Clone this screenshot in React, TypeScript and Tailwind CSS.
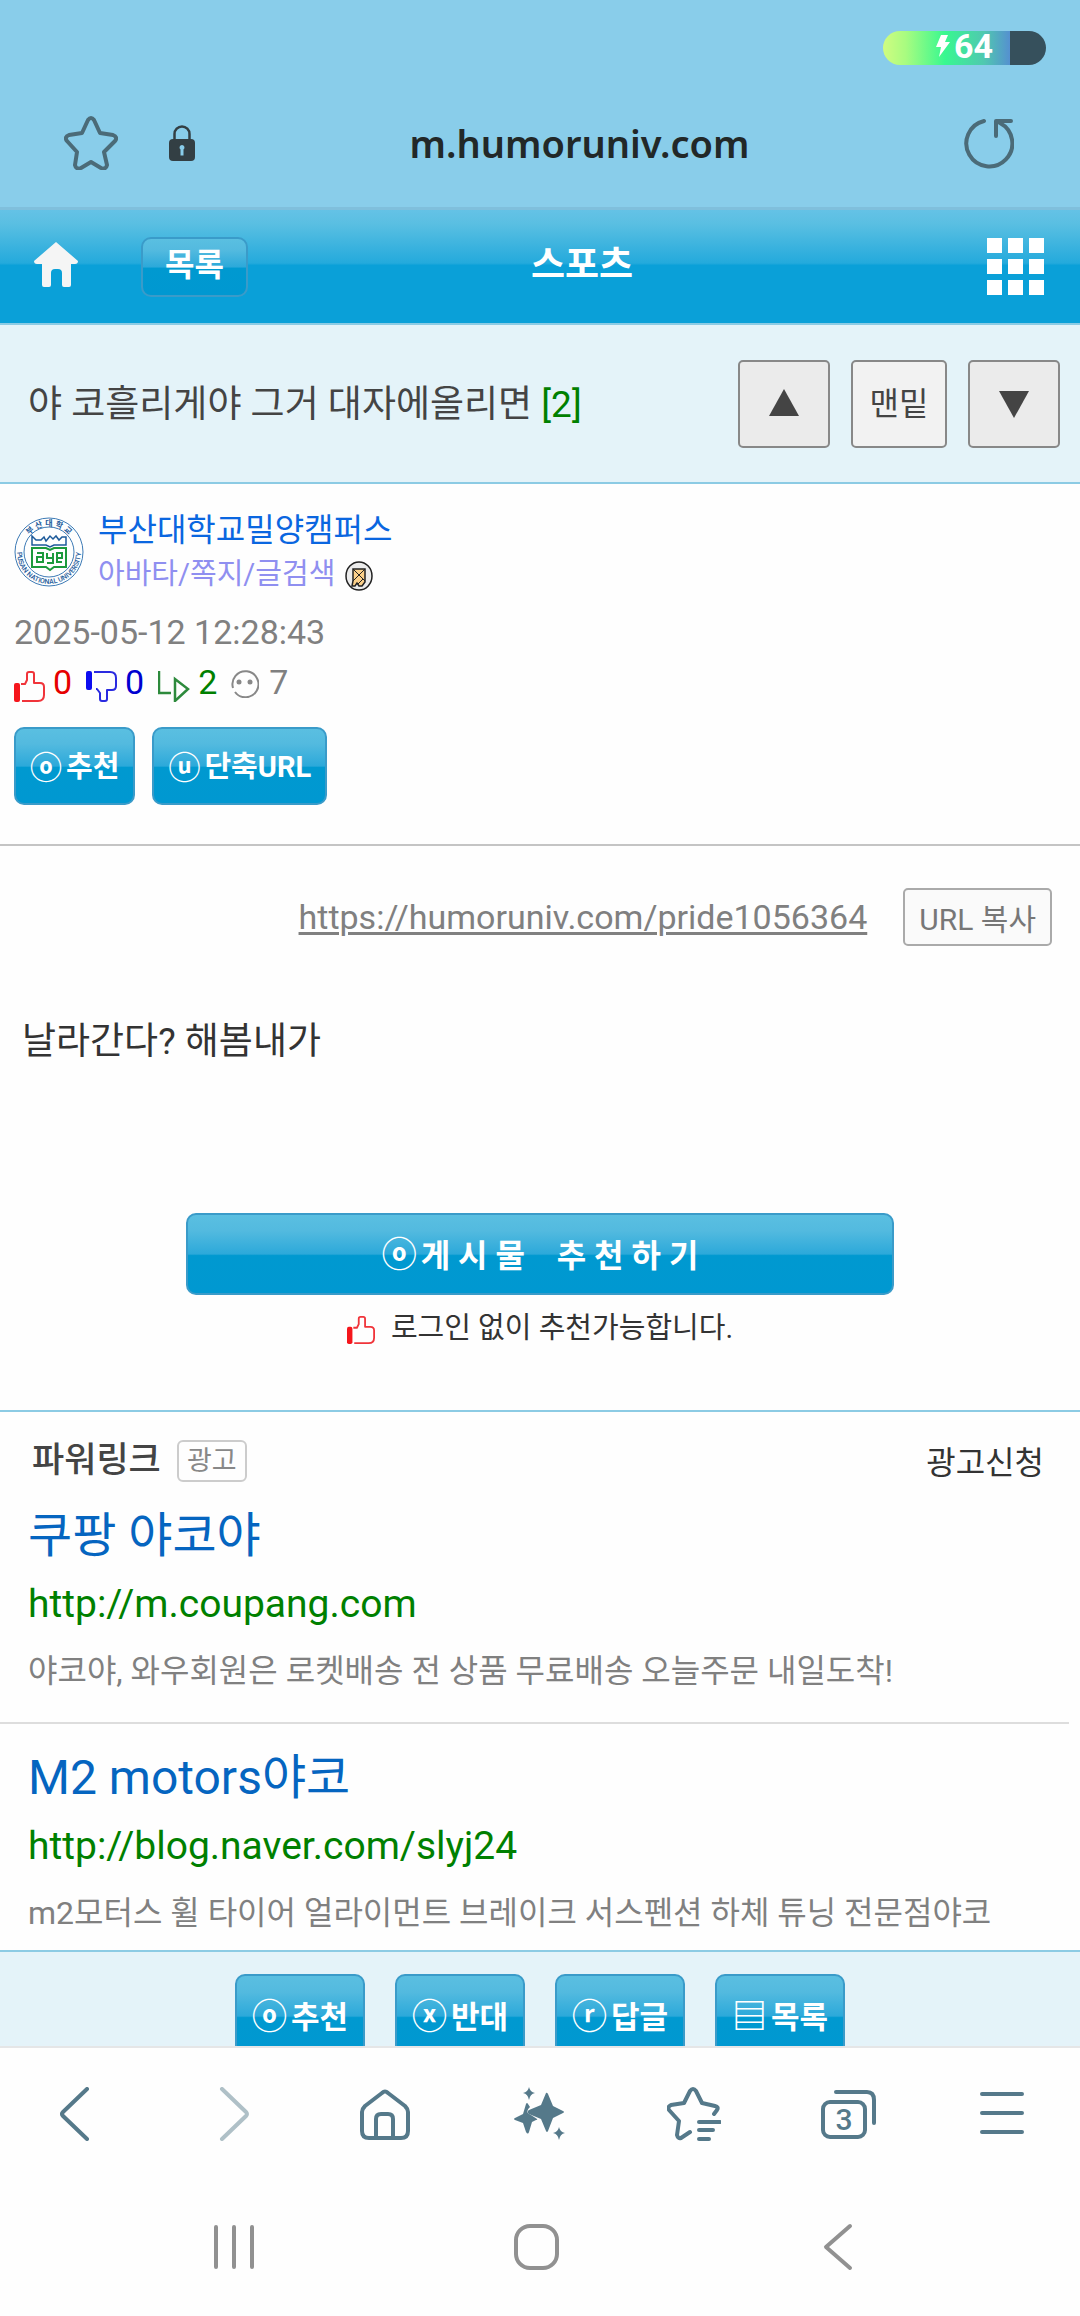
import type { ReactNode } from 'react'

const GLOSS = 'bg-[linear-gradient(#5abfe1_0%,#53badf_20%,#2ca9da_50%,#0099d0_52%,#0098d1_100%)]'

const ADS = [
  {
    title: '쿠팡 야코야',
    url: 'http://m.coupang.com',
    text: '야코야, 와우회원은 로켓배송 전 상품 무료배송 오늘주문 내일도착!',
  },
  {
    title: 'M2 motors야코',
    url: 'http://blog.naver.com/slyj24',
    text: 'm2모터스 휠 타이어 얼라이먼트 브레이크 서스펜션 하체 튜닝 전문점야코',
  },
]

const ACTIONS = [
  { mark: 'ⓞ', label: '추천' },
  { mark: 'ⓧ', label: '반대' },
  { mark: 'ⓡ', label: '답글' },
  { mark: '▤', label: '목록' },
]

function ThumbUp({ className }: { className: string }) {
  return (
    <svg viewBox="0 0 31 31" className={className} fill="none" stroke="#f0343a" strokeWidth="2" strokeLinejoin="round">
      <rect x="0" y="12" width="6" height="19" rx="2" fill="#f5161c" stroke="none" />
      <path d="M7 13h4l2-4V3q0-2 2-2h3q2 0 2 2v9h6q4 0 4 4v8q0 6-6 6H8" />
    </svg>
  )
}

function ThumbDown() {
  return (
    <svg viewBox="0 0 31 31" className="size-[31px]" fill="none" stroke="#2a2ae0" strokeWidth="2" strokeLinejoin="round">
      <rect x="0" y="0" width="6" height="19" rx="2" fill="#0d0df0" stroke="none" />
      <path d="M8 1h16q6 0 6 6v8q0 4-4 4h-5v9q0 2-2 2h-3q-2 0-2-2v-6l-3-4H10" />
    </svg>
  )
}

function Emblem() {
  return (
    <svg viewBox="0 0 70 72" className="h-[72px] w-[70px] shrink-0" fill="none" aria-label="부산대학교">
      <defs>
        <path id="emblem-top" d="M9 36a26 26 0 0 1 52 0" />
        <path id="emblem-bottom" d="M4 28A32 32 0 1 0 66 28" />
      </defs>
      <circle cx="35" cy="36" r="34" stroke="#3d7ab5" />
      <circle cx="35" cy="36" r="25" stroke="#3d7ab5" />
      <text fill="#1d5a9a" fontSize="8" fontWeight="700" textAnchor="middle">
        <textPath href="#emblem-top" startOffset="50%">부 산 대 학 교</textPath>
      </text>
      <text fill="#1d5a9a" fontSize="7" fontWeight="500" textAnchor="middle">
        <textPath href="#emblem-bottom" startOffset="50%">PUSAN NATIONAL UNIVERSITY</textPath>
      </text>
      <path d="M18 20l4 4h5l3-3 2 4 4-5 3 3 3-3 3 4 3-3h4v8H40l-4 2-4-2H18z" stroke="#1d5a9a" strokeWidth="1.5" />
      <path d="M18 32h14l4 2 4-2h12v19H40l-4 3-4-3H18z" stroke="#1c9a3c" strokeWidth="2" />
      <path d="M23 37h6v9h-6v-5h6M33 37v5h6M39 37v10h-6M48 46h-5v-9h5v5h-5" stroke="#1c9a3c" strokeWidth="2" />
    </svg>
  )
}

function GlossButton({ className, children }: { className: string; children: ReactNode }) {
  return (
    <button type="button"
      className={`flex items-center justify-center rounded-[10px] border-2 border-[#3a9bc9] font-bold text-white ${GLOSS} ${className}`}>
      {children}
    </button>
  )
}

function BrowserBar() {
  return (
    <header className="shrink-0 border-b-[3px] border-[#80bfdc] bg-[#89cdea]">
      <div className="flex justify-end pr-[34px] pt-[31px]">
        <div className="flex h-[34px] w-[163px] items-center justify-center gap-1 rounded-full bg-[linear-gradient(90deg,#d0fc80_0%,#a8fc80_14%,#38f890_38%,#50c8b0_62%,#5590d0_78%,#36505c_78%)] pb-1 text-[34px] leading-8 font-bold text-white">
          <svg viewBox="0 0 14 22" className="h-[22px] w-[14px]" fill="#fff">
            <path d="M5 0h7L9 7h5L3 22l2-10H0z" />
          </svg>
          64
        </div>
      </div>
      <div className="mt-[14px] flex h-32 items-center pl-16 pr-[66px] text-[#4b6b78]">
        <button type="button" aria-label="북마크">
          <svg viewBox="0 0 54 54" className="size-[54px]" fill="none" stroke="currentColor" strokeWidth="4" strokeLinejoin="round">
            <path d="M24 4q3-4 6 0l6 13 13 2q5 2 2 6L40 36l3 13q-1 5-6 3l-10-6-10 6q-5 2-6-3l2-13L3 25q-3-4 2-6l13-2z" />
          </svg>
        </button>
        <svg viewBox="0 0 26 36" className="ml-[51px] h-9 w-[26px]" fill="none">
          <path d="M5.500 15V9a7.500 7.500 0 0 1 15 0v6" stroke="#333f44" strokeWidth="2.500" />
          <rect y="14" width="26" height="22" rx="4" fill="#333f44" />
          <path d="M13 20a2.500 2.500 0 0 1 1.500 4.500v6h-3v-6A2.500 2.500 0 0 1 13 20z" fill="#89cdea" />
        </svg>
        <div className="flex-1 text-center font-['Noto_Sans','Roboto',sans-serif] text-[38px] leading-[48px] font-semibold text-[#222828]">m.humoruniv.com</div>
        <button type="button" aria-label="새로고침">
          <svg viewBox="0 0 50 52" className="h-[52px] w-[50px]" fill="none" stroke="currentColor" strokeWidth="4" strokeLinecap="round" strokeLinejoin="round">
            <path d="M20 4A23 23 0 1 0 36 6M47 4H32v15" />
          </svg>
        </button>
      </div>
    </header>
  )
}

function BoardHeader() {
  return (
    <div className="grid h-[115px] grid-cols-[248px_1fr_164px] items-center border-b-2 border-[#8ccbe4] bg-[linear-gradient(#64c2e6_0%,#5abfe2_12%,#24aadc_47%,#0aa0d8_49%)] text-white">
      <div className="flex items-center justify-between pl-[34px]">
        <a href="#home" aria-label="홈">
          <svg viewBox="0 0 44 50" className="h-[50px] w-11" fill="#f5f5f5">
            <path d="M22 0l22 19q0 3-3 3h-4v21q0 2-2 2h-5q-2 0-2-2V31q0-4-4-4h-3q-4 0-4 4v12q0 2-2 2h-5q-2 0-2-2V22H3q-3 0-3-3z" />
          </svg>
        </a>
        <GlossButton className="h-[60px] w-[107px] pb-1 text-[32px]">목록</GlossButton>
      </div>
      <h1 className="pb-0.5 text-center text-[37px] leading-[48px] font-bold">스포츠</h1>
      <button type="button" aria-label="전체 메뉴" className="ml-auto mr-9 grid grid-cols-3 gap-[6px]">
        {Array.from({ length: 9 }, (_, i) => <span key={i} className="size-[15px] bg-white" />)}
      </button>
    </div>
  )
}

function TitleBar() {
  return (
    <div className="flex h-[159px] items-center border-b-2 border-[#8ccbe4] bg-[#e4f3f9] pl-7 pr-5 text-[#444]">
      <h2 className="flex-1 pt-0.5 text-[37px] leading-[48px]">
        야 코흘리게야 그거 대자에올리면 <span className="text-[#008000]">[2]</span>
      </h2>
      <div className="flex gap-[21px] text-[32px]">
        <button type="button" aria-label="이전 글" className="flex h-[88px] w-[92px] items-center justify-center rounded-[5px] border-2 border-[#888] bg-[#ebebeb]">
          <svg viewBox="0 0 30 30" className="size-[30px]" fill="#444"><path d="M15 0l15 27H0z" /></svg>
        </button>
        <button type="button" className="h-[88px] w-24 rounded-[5px] border-2 border-[#888] bg-[#f2f2f2]">맨밑</button>
        <button type="button" aria-label="다음 글" className="flex h-[88px] w-[92px] items-center justify-center rounded-[5px] border-2 border-[#888] bg-[#ebebeb]">
          <svg viewBox="0 0 30 30" className="size-[30px]" fill="#444"><path d="M0 2h30L15 29z" /></svg>
        </button>
      </div>
    </div>
  )
}

function Author() {
  return (
    <section className="border-b-2 border-[#c4c4c4] px-[14px] pb-[39px] pt-6">
      <div className="flex items-center gap-[14px]">
        <Emblem />
        <div className="leading-[44px]">
          <div className="text-[32px] text-[#0a66e0]">부산대학교밀양캠퍼스</div>
          <div className="flex items-center gap-[10px] text-[29px] text-[#8f8ff0]">
            아바타/쪽지/글검색
            <svg viewBox="0 0 28 30" className="mt-1 h-[30px] w-7" stroke="#222" fill="none">
              <ellipse cx="14" cy="15" rx="13" ry="14" fill="#ececec" strokeWidth="1.500" />
              <path d="M8 8h12v13l-3 4h-3l-2-3-2 3H7l1-5z" fill="#fbd08a" strokeWidth="1.500" />
              <path d="M8 8l12 12M20 8L8 20M13 23l5-5" strokeWidth="1" />
            </svg>
          </div>
        </div>
      </div>
      <time className="mt-3 block text-[34px] leading-[48px] text-[#808080]">2025-05-12 12:28:43</time>
      <div className="mt-0.5 flex items-center text-[34px] leading-[48px]">
        <ThumbUp className="mt-2 size-[31px]" />
        <span className="ml-2 mr-[14px] text-[#e60000]">0</span>
        <span className="mt-2"><ThumbDown /></span>
        <span className="ml-2 mr-[14px] text-[#0000d0]">0</span>
        <svg viewBox="0 0 32 31" className="mt-2 h-[31px] w-8" fill="none" stroke="#2d8a3c" strokeWidth="2.500">
          <path d="M1 0v22h12" />
          <path d="M17 8v22l13-12z" />
        </svg>
        <span className="ml-2 mr-[14px] text-[#008000]">2</span>
        <svg viewBox="0 0 28 28" className="mt-1 size-7" fill="none" stroke="#888" strokeWidth="2">
          <path d="M2 18a13 13 0 1 1 2 4" />
          <circle cx="8" cy="12" r="2.500" fill="#888" stroke="none" />
          <circle cx="19" cy="12" r="2.500" fill="#888" stroke="none" />
        </svg>
        <span className="ml-[10px] text-[#808080]">7</span>
      </div>
      <div className="mt-[21px] flex gap-[17px] text-[29px]">
        <GlossButton className="h-[78px] gap-1 px-[14px] pt-1"><span className="text-[32px]">ⓞ</span>추천</GlossButton>
        <GlossButton className="h-[78px] gap-1 px-[14px] pt-1"><span className="text-[32px]">ⓤ</span>단축URL</GlossButton>
      </div>
    </section>
  )
}

function PostBody() {
  return (
    <article className="pb-[62px] pt-[42px] text-[#333]">
      <div className="flex items-center justify-end gap-9 pr-7 text-[#808080]">
        <a href="#pride1056364" className="text-[34px] leading-[48px] underline decoration-[3px] underline-offset-[3px]">https://humoruniv.com/pride1056364</a>
        <button type="button" className="h-[58px] rounded-[5px] border-2 border-[#aaa] bg-[#fafafa] px-[14px] pt-1 text-[30px] text-[#777]">URL 복사</button>
      </div>
      <p className="mt-[72px] pl-[22px] text-[37px] leading-[48px]">날라간다? 해봄내가</p>
      <div className="mt-[147px] px-[186px]">
        <GlossButton className="h-[82px] w-full gap-1 pt-1 text-[32px] whitespace-pre"><span className="text-[35px]">ⓞ</span>게 시 물    추 천 하 기</GlossButton>
      </div>
      <p className="mt-[13px] flex items-center justify-center gap-4 text-[29px] leading-10">
        <ThumbUp className="mt-1 size-7" />
        로그인 없이 추천가능합니다.
      </p>
    </article>
  )
}

function PowerLinks() {
  return (
    <section className="border-t-2 border-[#8ccbe4] pt-7">
      <div className="flex items-center pl-8 pr-9">
        <span className="text-[35px] leading-[42px] font-medium text-[#444]">파워링크</span>
        <span className="ml-4 flex h-[42px] w-[70px] items-center justify-center rounded-[6px] border-2 border-[#ccc] text-[27px] leading-8 text-[#888]">광고</span>
        <a href="#ad" className="ml-auto pt-1 text-[32px] leading-[38px] text-[#333]">광고신청</a>
      </div>
      <ul>
        {ADS.map(ad => (
          <li key={ad.url} className="mr-[11px] border-b-2 border-[#ddd] pb-[27px] pl-7 pt-6 last:border-b-0 last:pb-[13px]">
            <a href="#ad" className="block text-[48px] leading-[60px] text-[#0565c0]">{ad.title}</a>
            <div className="mt-[10px] text-[39px] leading-[56px] text-[#008000]">{ad.url}</div>
            <p className="mt-[15px] text-[32px] leading-[48px] text-[#808080]">{ad.text}</p>
          </li>
        ))}
      </ul>
    </section>
  )
}

function Toolbar() {
  const cell = 'flex h-[132px] items-center justify-center'
  return (
    <nav className="grid grid-cols-7 border-t-2 border-[#e5e6e7] text-[#55798a]">
      <button type="button" aria-label="뒤로" className={cell}>
        <svg viewBox="0 0 54 54" className="size-[54px]" fill="none" stroke="currentColor" strokeWidth="4" strokeLinecap="round" strokeLinejoin="round"><path d="M37 2L13 25q-2 2 0 4l24 23" /></svg>
      </button>
      <button type="button" aria-label="앞으로" className={`${cell} text-[#afc0c7]`} disabled>
        <svg viewBox="0 0 54 54" className="size-[54px]" fill="none" stroke="currentColor" strokeWidth="4" strokeLinecap="round" strokeLinejoin="round"><path d="M18 2l24 23q2 2 0 4L18 52" /></svg>
      </button>
      <button type="button" aria-label="홈페이지" className={cell}>
        <svg viewBox="0 0 54 54" className="size-[54px]" fill="none" stroke="currentColor" strokeWidth="4" strokeLinejoin="round">
          <path d="M23 6q3-3 6 0l17 13q3 3 3 6v19q0 7-7 7H10q-7 0-7-7V25q0-3 3-6z" />
          <path d="M17 51V32q0-5 5-5h7q5 0 5 5v19" />
        </svg>
      </button>
      <button type="button" aria-label="AI 어시스트" className={cell}>
        <svg viewBox="0 0 54 54" className="size-[54px]" fill="currentColor">
          <path d="M16 0q1 5 6 6-5 1-6 7-1-6-6-7 5-1 6-6z" />
          <path d="M13 17q1-2 2 0l2 3q-6 5 1 8l6 4q1 1-1 1l-4 2-3 10q-1 3-3 0l-3-9-8-3q-2-1 0-2l8-4z" />
          <path d="M33 6q1-1 2 1l5 12 10 5q2 1 0 2l-10 5-5 13q-1 2-2 0l-5-12-12-5q-3-2 0-4l12-5z" />
          <path d="M46 40q1 5 6 6-5 1-6 7-1-6-6-7 5-1 6-6z" />
        </svg>
      </button>
      <button type="button" aria-label="북마크 목록" className={cell}>
        <svg viewBox="0 0 54 54" className="size-[54px]" fill="none" stroke="currentColor" strokeWidth="4" strokeLinecap="round" strokeLinejoin="round">
          <path d="M47 27l3-4q2-3-2-4l-13-3-6-12q-3-4-6 0l-6 12-13 2q-4 2-2 5l10 11-2 14q1 4 4 3l9-6" />
          <path d="M32 35h21M32 43h14M32 52h10" />
        </svg>
      </button>
      <button type="button" aria-label="탭 3개" className={cell}>
        <svg viewBox="0 0 56 54" className="h-[54px] w-14" fill="none" stroke="currentColor" strokeWidth="4" strokeLinecap="round" strokeLinejoin="round">
          <rect x="2" y="15" width="42" height="35" rx="7" />
          <path d="M15 5h31q7 0 7 8v23" />
          <text x="23" y="43" textAnchor="middle" fill="currentColor" stroke="none" fontSize="30" fontWeight="500">3</text>
        </svg>
      </button>
      <button type="button" aria-label="메뉴" className={cell}>
        <svg viewBox="0 0 54 54" className="size-[54px]" stroke="currentColor" strokeWidth="4" strokeLinecap="round"><path d="M6 7h40M6 26h40M6 45h40" /></svg>
      </button>
    </nav>
  )
}

function SystemNav() {
  const cell = 'flex h-[136px] items-center justify-center pb-0.5'
  return (
    <nav className="grid grid-cols-3 pl-[83px] pr-[91px] text-[#919191]">
      <button type="button" aria-label="최근 앱" className={cell}>
        <svg viewBox="0 0 48 48" className="size-12" stroke="currentColor" strokeWidth="4" strokeLinecap="round"><path d="M6 4v40M24 4v40M42 4v40" /></svg>
      </button>
      <button type="button" aria-label="홈 화면" className={cell}>
        <svg viewBox="0 0 48 48" className="size-12" fill="none" stroke="currentColor" strokeWidth="4"><rect x="4" y="3" width="41" height="42" rx="14" /></svg>
      </button>
      <button type="button" aria-label="뒤로가기" className={cell}>
        <svg viewBox="0 0 48 48" className="size-12" fill="none" stroke="currentColor" strokeWidth="4" strokeLinecap="round" strokeLinejoin="round"><path d="M36 3L12 24l24 21" /></svg>
      </button>
    </nav>
  )
}

export default function App() {
  return (
    <div className="flex h-screen flex-col bg-[#fefefe] font-['Roboto','Noto_Sans_CJK_KR',sans-serif]">
      <BrowserBar />
      <main className="min-h-0 flex-1 overflow-y-auto [scrollbar-width:none]">
        <BoardHeader />
        <TitleBar />
        <Author />
        <PostBody />
        <PowerLinks />
        <div className="flex justify-center gap-[30px] border-t-2 border-[#8ccbe4] bg-[#e4f3f9] py-[22px] text-[31px]">
          {ACTIONS.map(a => (
            <GlossButton key={a.label} className="h-[84px] w-[130px] gap-1 pt-1"><span className="text-[35px]">{a.mark}</span>{a.label}</GlossButton>
          ))}
        </div>
      </main>
      <footer className="shrink-0 bg-[#fefefe]">
        <Toolbar />
        <SystemNav />
      </footer>
    </div>
  )
}
